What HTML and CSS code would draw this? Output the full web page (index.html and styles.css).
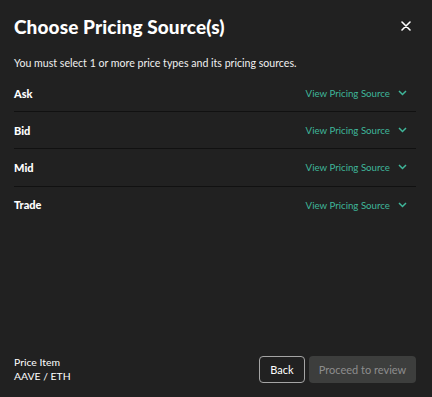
FILE: index.html
```html
<!DOCTYPE html>
<html lang="en">
<head>
    <meta charset="UTF-8">
    <meta name="viewport" content="width=device-width, initial-scale=1.0">
    <title>Choose Pricing Source(s)</title>
    <link rel="stylesheet" href="styles.css">
</head>
<body>
    <div class="modal">
        <div class="modal-header">
            <h1>Choose Pricing Source(s)</h1>
            <button class="close-button" aria-label="Close">
                <svg width="10" height="10" viewBox="0 0 10 10">
                    <path d="M1 1L9 9M9 1L1 9" stroke="#fff" stroke-width="1.6" stroke-linecap="round"/>
                </svg>
            </button>
        </div>
        <p class="intro">You must select 1 or more price types and its pricing sources.</p>
        <div class="price-list">
            <div class="price-row">
                <span class="price-type">Ask</span>
                <a class="source-link" href="#">View Pricing Source
                    <svg width="9" height="6" viewBox="0 0 9 6"><path d="M1 1L4.5 4.5L8 1" fill="none" stroke="#3fb79a" stroke-width="1.5"/></svg>
                </a>
            </div>
            <div class="price-row">
                <span class="price-type">Bid</span>
                <a class="source-link" href="#">View Pricing Source
                    <svg width="9" height="6" viewBox="0 0 9 6"><path d="M1 1L4.5 4.5L8 1" fill="none" stroke="#3fb79a" stroke-width="1.5"/></svg>
                </a>
            </div>
            <div class="price-row">
                <span class="price-type">Mid</span>
                <a class="source-link" href="#">View Pricing Source
                    <svg width="9" height="6" viewBox="0 0 9 6"><path d="M1 1L4.5 4.5L8 1" fill="none" stroke="#3fb79a" stroke-width="1.5"/></svg>
                </a>
            </div>
            <div class="price-row">
                <span class="price-type">Trade</span>
                <a class="source-link" href="#">View Pricing Source
                    <svg width="9" height="6" viewBox="0 0 9 6"><path d="M1 1L4.5 4.5L8 1" fill="none" stroke="#3fb79a" stroke-width="1.5"/></svg>
                </a>
            </div>
        </div>
        <div class="modal-footer">
            <div class="price-item">
                <div>Price Item</div>
                <div>AAVE / ETH</div>
            </div>
            <div class="actions">
                <button class="back-button">Back</button>
                <button class="proceed-button" disabled>Proceed to review</button>
            </div>
        </div>
    </div>
</body>
</html>
```

FILE: styles.css
```css
body {
    margin: 0;
    background-color: #212121;
    font-family: Lato, "Liberation Sans", sans-serif;
    color: #fff;
}
.modal {
    height: 397px;
    box-sizing: border-box;
    padding: 14px 16px 14px 14px;
    display: flex;
    flex-direction: column;
}
.modal-header {
    display: flex;
    justify-content: space-between;
    align-items: center;
    height: 24px;
}
h1 {
    margin: 0;
    font-size: 19px;
    font-weight: 900;
    letter-spacing: 0.1px;
}
.close-button {
    background: none;
    border: none;
    padding: 0;
    margin-right: 5px;
    display: flex;
    cursor: pointer;
}
.intro {
    margin: 18px 0 0;
    font-size: 10.6px;
    line-height: 14px;
    color: #f0f0f0;
}
.price-list {
    margin-top: 5px;
}
.price-row {
    display: flex;
    justify-content: space-between;
    align-items: center;
    height: 36.2px;
    border-bottom: 1px solid #111;
}
.price-row:last-child {
    border-bottom: none;
}
.price-type {
    font-size: 11px;
    font-weight: 900;
}
.source-link {
    display: flex;
    align-items: center;
    gap: 8px;
    color: #3fb79a;
    font-size: 9.7px;
    text-decoration: none;
    margin-right: 9px;
}
.modal-footer {
    margin-top: auto;
    display: flex;
    justify-content: space-between;
    align-items: center;
}
.price-item {
    font-size: 10.4px;
    line-height: 14px;
}
.actions {
    display: flex;
    gap: 4px;
}
button {
    font-family: inherit;
}
.back-button,
.proceed-button {
    height: 27px;
    border-radius: 4px;
    font-size: 11px;
    white-space: nowrap;
}
.back-button {
    background: none;
    color: #fff;
    border: 1px solid #a5a5a5;
    width: 46px;
    padding: 0;
}
.proceed-button {
    background-color: #3d3e3d;
    color: #8d8d8d;
    border: none;
    width: 107px;
    padding: 0;
}
```
